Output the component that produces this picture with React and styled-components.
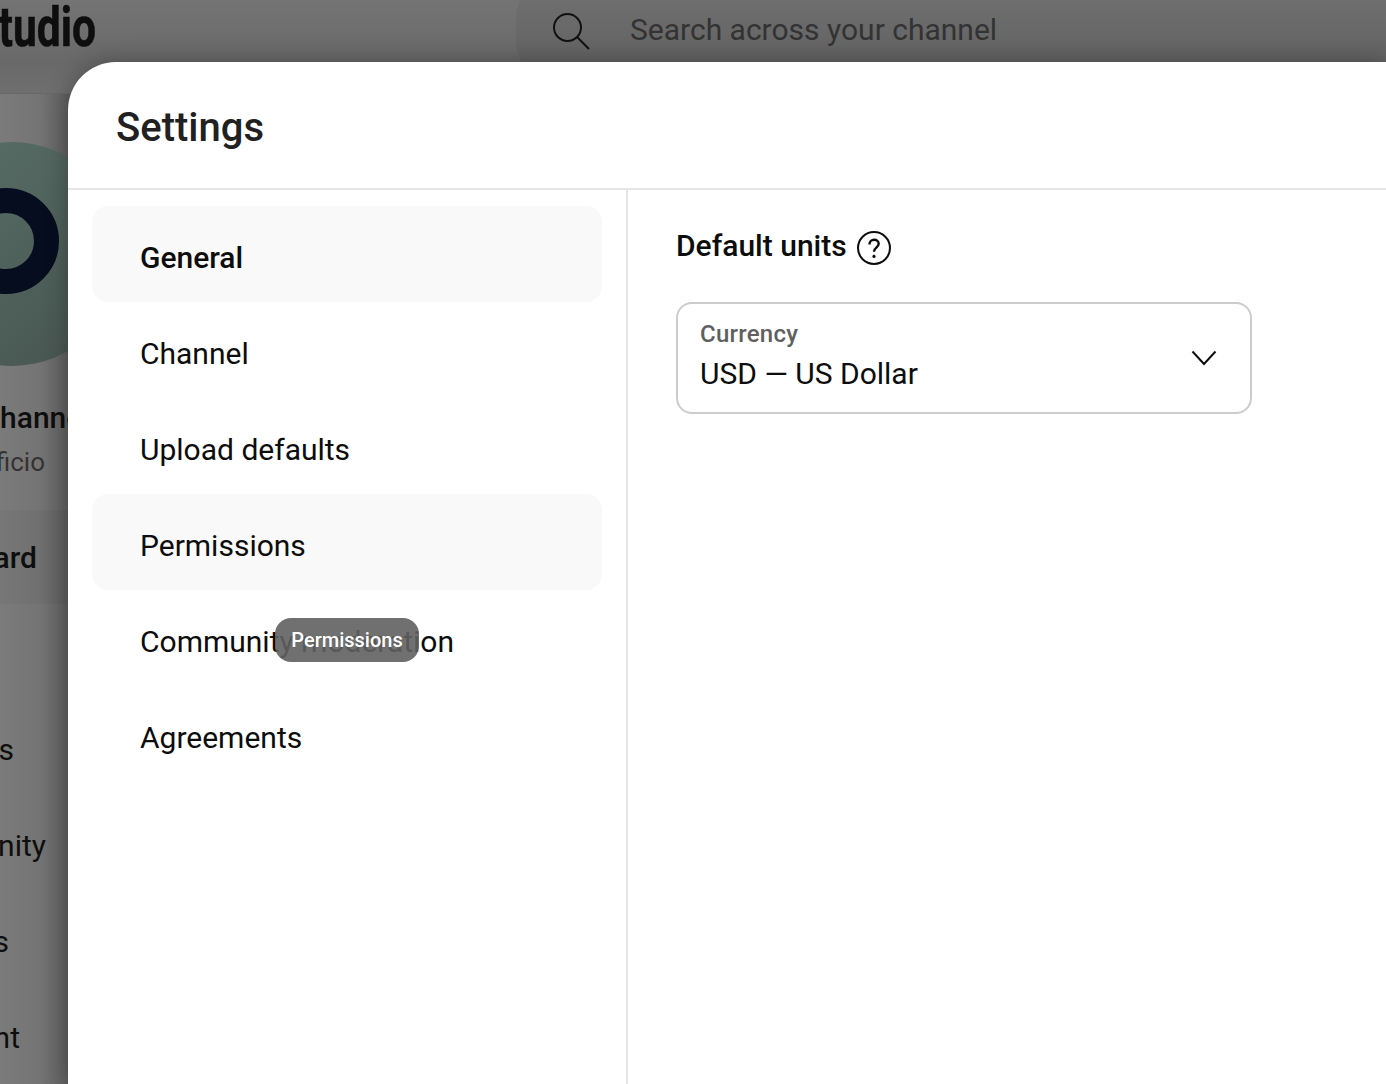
import React from 'react';
import styled, { createGlobalStyle } from 'styled-components';

const GlobalStyle = createGlobalStyle`
  html, body {
    margin: 0;
    height: 100%;
    overflow: hidden;
    font-family: Roboto, "Liberation Sans", sans-serif;
    background: #6f6f6f;
  }
`;

const navItems = [
  { label: 'General', active: true, selected: true },
  { label: 'Channel' },
  { label: 'Upload defaults' },
  { label: 'Permissions', active: true },
  { label: 'Community moderation', tooltip: 'Permissions' },
  { label: 'Agreements' },
];

const sideLinks = [
  { label: 'Dashboard', end: 37, current: true, strong: true },
  { label: 'Content', end: -40 },
  { label: 'Analytics', end: 14 },
  { label: 'Community', end: 46 },
  { label: 'Subtitles', end: 9 },
  { label: 'Content', end: 20 },
];

function Avatar() {
  return (
    <AvatarSvg viewBox="0 0 68 224" width="68" height="224">
      <defs>
        <linearGradient id="avatarFill" x1="0" y1="0" x2="1" y2="1">
          <stop offset="0" stopColor="#5a7269" />
          <stop offset="1" stopColor="#46524e" />
        </linearGradient>
      </defs>
      <circle cx="12" cy="112" r="112" fill="url(#avatarFill)" />
      <circle cx="6" cy="99" r="40.5" fill="none" stroke="#050d1f" strokeWidth="25" />
    </AvatarSvg>
  );
}

function Backdrop() {
  return (
    <Page>
      <TopBar>
        <Logo>
          <LogoText>Studio</LogoText>
        </Logo>
        <SearchField>
          <svg width="38" height="38" viewBox="0 0 38 38" fill="none" stroke="#111" strokeWidth="2">
            <circle cx="15.5" cy="15.5" r="13.5" />
            <path d="M25 25l12 12" />
          </svg>
          <SearchText>Search across your channel</SearchText>
        </SearchField>
      </TopBar>
      <Sidebar>
        <Avatar />
        <ChannelRow $end={90}>Your channel</ChannelRow>
        <ChannelSub $end={45}>Beneficio</ChannelSub>
        <SideList>
          {sideLinks.map((link, i) => (
            <SideLink key={i} $end={link.end} $current={link.current} $strong={link.strong}>
              <span>{link.label}</span>
            </SideLink>
          ))}
        </SideList>
      </Sidebar>
    </Page>
  );
}

function Settings() {
  return (
    <Dialog>
      <DialogHeader>
        <DialogTitle>Settings</DialogTitle>
      </DialogHeader>
      <DialogBody>
        <Nav>
          {navItems.map((item) => (
            <NavItem key={item.label} $active={item.active} $selected={item.selected}>
              {item.label}
              {item.tooltip && <Tooltip>{item.tooltip}</Tooltip>}
            </NavItem>
          ))}
        </Nav>
        <Content>
          <SectionTitle>
            <SectionText>Default units</SectionText>
            <svg width="36" height="36" viewBox="0 0 36 36" fill="none">
              <circle cx="18" cy="18" r="16" stroke="#0d0d0d" strokeWidth="2" />
              <path d="M13.4 14.4c0-2.8 2.1-4.6 4.7-4.6s4.6 1.6 4.6 4c0 3.6-4.7 3.6-4.7 8" stroke="#0d0d0d" strokeWidth="2.4" />
              <circle cx="18" cy="26.4" r="1.6" fill="#0d0d0d" />
            </svg>
          </SectionTitle>
          <Select>
            <SelectText>
              <SelectLabel>Currency</SelectLabel>
              <SelectValue>USD — US Dollar</SelectValue>
            </SelectText>
            <svg width="26" height="18" viewBox="0 0 26 18" fill="none" stroke="#0d0d0d" strokeWidth="2">
              <path d="M1.5 2.5L13 15 24.5 2.5" />
            </svg>
          </Select>
        </Content>
      </DialogBody>
    </Dialog>
  );
}

export default function App() {
  return (
    <>
      <GlobalStyle />
      <Backdrop />
      <Settings />
    </>
  );
}

const Page = styled.div`
  height: 1084px;
  overflow: hidden;
  background: linear-gradient(90deg, #7b7b7b 0, #747474 40px, #5f5f5f 68px);
`;

const TopBar = styled.header`
  height: 94px;
  display: flex;
  align-items: flex-start;
  background: linear-gradient(180deg, #747474 0, #696969 62px, #6f6f6f 94px);
  border-bottom: 1px solid #686868;
  box-sizing: border-box;
`;

const Logo = styled.div`
  width: 516px;
  height: 60px;
  overflow: hidden;
  flex: none;
`;

const LogoText = styled.div`
  width: 96px;
  height: 54px;
  display: flex;
  justify-content: flex-end;
  align-items: center;
  font-size: 56px;
  font-weight: 700;
  color: #0e0e0e;
  -webkit-text-stroke: 0.6px #0e0e0e;
  transform: scaleX(0.76);
  transform-origin: right center;
`;

const SearchField = styled.div`
  flex: 1;
  height: 120px;
  margin-top: -30px;
  padding: 30px 0 0 36px;
  box-sizing: border-box;
  display: flex;
  align-items: flex-start;
  gap: 40px;
  border-radius: 50px 0 0 50px;
  background: rgba(0, 0, 0, 0.05);

  svg {
    margin-top: 12px;
  }
`;

const SearchText = styled.div`
  margin-top: 10px;
  font-size: 30px;
  line-height: 40px;
  color: #333;
  white-space: nowrap;
`;

const Sidebar = styled.aside`
  width: 68px;
  overflow: hidden;
  padding-top: 48px;
`;

const AvatarSvg = styled.svg`
  display: block;
`;

const ChannelRow = styled.div`
  display: flex;
  justify-content: flex-end;
  margin-top: 32px;
  margin-right: ${(p) => 68 - p.$end}px;
  font-size: 30px;
  font-weight: 500;
  line-height: 40px;
  color: #0e0e0e;
  white-space: nowrap;
`;

const ChannelSub = styled.div`
  display: flex;
  justify-content: flex-end;
  margin-top: 6px;
  margin-right: ${(p) => 68 - p.$end}px;
  font-size: 26px;
  line-height: 36px;
  color: #333;
  white-space: nowrap;
`;

const SideList = styled.nav`
  margin-top: 30px;
`;

const SideLink = styled.div`
  height: 94px;
  display: flex;
  align-items: center;
  justify-content: flex-end;
  margin-bottom: 2px;
  font-size: 30px;
  font-weight: ${(p) => (p.$strong ? 500 : 400)};
  color: #0e0e0e;
  white-space: nowrap;
  background: ${(p) => (p.$current ? 'rgba(0, 0, 0, 0.03)' : 'transparent')};

  span {
    margin-right: ${(p) => 68 - p.$end}px;
  }
`;

const Dialog = styled.section`
  position: absolute;
  left: 68px;
  top: 62px;
  right: 0;
  bottom: 0;
  display: flex;
  flex-direction: column;
  background: #fff;
  border-top-left-radius: 48px;
  box-shadow: 0 0 24px rgba(0, 0, 0, 0.3);
`;

const DialogHeader = styled.div`
  height: 128px;
  flex: none;
  box-sizing: border-box;
  display: flex;
  align-items: center;
  padding: 4px 48px 0;
  border-bottom: 2px solid #e5e5e5;
`;

const DialogTitle = styled.h1`
  margin: 0;
  font-size: 40px;
  font-weight: 500;
  color: #212121;
`;

const DialogBody = styled.div`
  flex: 1;
  display: flex;
  min-height: 0;
`;

const Nav = styled.nav`
  width: 560px;
  flex: none;
  box-sizing: border-box;
  padding: 16px 24px;
  border-right: 2px solid #e5e5e5;
`;

const NavItem = styled.div`
  position: relative;
  height: 96px;
  padding: 6px 48px 0;
  display: flex;
  align-items: center;
  font-size: 30px;
  font-weight: ${(p) => (p.$selected ? 500 : 400)};
  color: #0d0d0d;
  white-space: nowrap;
  border-radius: 16px;
  background: ${(p) => (p.$active ? '#f9f9f9' : 'transparent')};
  box-sizing: border-box;
`;

const Tooltip = styled.div`
  position: absolute;
  left: 183px;
  top: 28px;
  width: 144px;
  height: 44px;
  display: flex;
  align-items: center;
  justify-content: center;
  border-radius: 16px;
  background: rgba(97, 97, 97, 0.9);
  color: #fff;
  font-size: 20px;
  font-weight: 500;
`;

const Content = styled.div`
  flex: 1;
  padding: 36px 48px;
`;

const SectionTitle = styled.h2`
  margin: 0;
  height: 44px;
  display: flex;
  align-items: center;
  gap: 9px;
  font-size: 30px;
  font-weight: 500;
  color: #0d0d0d;
`;

const SectionText = styled.span`
  padding-bottom: 6px;
`;

const Select = styled.div`
  margin-top: 32px;
  width: 576px;
  height: 112px;
  box-sizing: border-box;
  display: flex;
  align-items: center;
  justify-content: space-between;
  padding: 0 33px 0 22px;
  border: 2px solid #ccc;
  border-radius: 16px;
`;

const SelectText = styled.div`
  display: flex;
  flex-direction: column;
  gap: 4px;
  padding-bottom: 4px;
`;

const SelectLabel = styled.div`
  font-size: 24px;
  line-height: 32px;
  font-weight: 500;
  letter-spacing: 0.25px;
  color: #606060;
`;

const SelectValue = styled.div`
  font-size: 30px;
  line-height: 40px;
  color: #0d0d0d;
`;
